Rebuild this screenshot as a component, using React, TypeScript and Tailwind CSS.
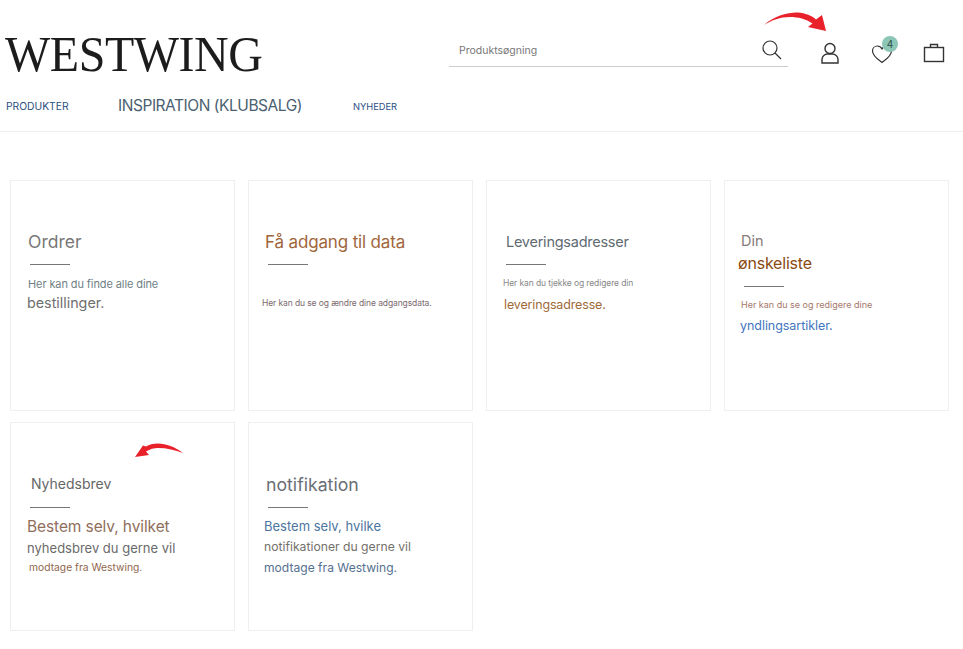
export default function App() {
  const cardBase = "relative bg-white border border-[#efefef]";
  const rule = "h-px w-10 bg-[#777]";
  return (
    <div className="relative w-[963px] h-[649px] overflow-hidden bg-white font-['Inter',sans-serif]">
      <header className="h-[132px] border-b border-[#eeeeee]">
        <div className="flex h-[92px]">
          <div className="w-[449px] shrink-0 pl-[5px] pt-[27px]">
            <span className="block h-[54px] origin-left scale-x-[0.96] font-['Liberation_Serif',serif] text-[50px] leading-[54px] tracking-[-0.5px] text-[#1c1c1c]">WESTWING</span>
          </div>
          <div className="mt-[35px] flex h-[32px] w-[339px] shrink-0 items-center justify-between border-b border-[#cccccc] pl-[10px] pr-[5px]">
            <span className="text-[10.5px] leading-[30px] text-[#777]">Produktsøgning</span>
            <svg width="21" height="21" viewBox="0 0 21 21" fill="none" stroke="#333" strokeWidth="1.2" className="mb-[1px]">
              <circle cx="8" cy="8" r="7" />
              <path d="M13 13l6 6" />
            </svg>
          </div>
          <svg width="20" height="22" viewBox="0 0 20 22" fill="none" stroke="#333" strokeWidth="1.4" className="ml-[32px] mt-[42px]">
            <circle cx="10" cy="6.5" r="5" />
            <path d="M2 21v-3.500C2 14 5 12 7.500 12h5c2.500 0 5.500 2 5.500 5.500V21z" />
          </svg>
          <div className="relative ml-[31px] mt-[44px] h-[20px] w-[22px]">
            <svg width="22" height="20" viewBox="0 0 22 20" fill="none" stroke="#333" strokeWidth="1.2">
              <path d="M11 18.500C7 15.500 1.500 12 1.500 7c0-3 2.300-5 4.800-5 2 0 3.700 1 4.700 3 1-2 2.700-3 4.700-3 2.500 0 4.800 2 4.800 5 0 5-5.500 8.500-9.500 11.500z" />
            </svg>
            <span className="absolute left-[11px] top-[-8px] flex h-4 w-4 items-center justify-center rounded-full bg-[#8cc6b6] text-[10px] leading-none text-[#2f4f48]">4</span>
          </div>
          <svg width="22" height="20" viewBox="0 0 22 20" fill="none" stroke="#333" strokeWidth="1.400" className="ml-[30px] mt-[43px]">
            <rect x="1.500" y="4.500" width="19" height="14" />
            <path d="M7.500 4.500V1.500h7v3" />
          </svg>
        </div>
        <nav className="flex h-[28px] items-center pl-[6px]">
          <span className="w-[112px] text-[10.300px] leading-[28px] text-[#2b4f7d]">PRODUKTER</span>
          <span className="w-[235px] text-[15.500px] leading-[28px] tracking-[-0.450px] text-[#4a6070]">INSPIRATION (KLUBSALG)</span>
          <span className="mt-[2px] text-[9.300px] leading-[28px] text-[#2b4f85]">NYHEDER</span>
        </nav>
      </header>

      <main className="grid grid-cols-[225px_225px_225px_225px] grid-rows-[231px_209px] gap-x-[13px] gap-y-[11px] pl-[10px] pt-[48px]">
        <section className={cardBase}>
          <h2 className="ml-[17px] mt-[49px] h-6 text-[17.500px] leading-6 text-[#777]">Ordrer</h2>
          <div className={`${rule} ml-[19px] mt-[10px]`} />
          <p className="ml-[17px] mt-[11px] h-4 text-[11px] leading-4 tracking-[-0.1px] text-[#6f7f85]">Her kan du finde alle dine</p>
          <p className="ml-[16px] mt-px h-5 text-[14.300px] leading-5 text-[#6f6f6f]">bestillinger.</p>
        </section>

        <section className={cardBase}>
          <h2 className="ml-[16px] mt-[49px] h-6 text-[17px] leading-6 tracking-[-0.15px] text-[#a0653a]">Få adgang til data</h2>
          <div className={`${rule} ml-[19px] mt-[10px]`} />
          <p className="ml-[13px] mt-[31px] h-[14px] text-[8.500px] leading-[14px] tracking-[-0.1px] text-[#7a6a6e]">Her kan du se og ændre dine adgangsdata.</p>
        </section>

        <section className={cardBase}>
          <h2 className="ml-[19px] mt-[51px] h-5 text-[14.500px] leading-5 tracking-[-0.25px] text-[#5f6b72]">Leveringsadresser</h2>
          <div className={`${rule} ml-[19px] mt-[12px]`} />
          <p className="ml-[16px] mt-[11px] h-[14px] text-[8.500px] leading-[14px] tracking-[-0.1px] text-[#888]">Her kan du tjekke og redigere din</p>
          <p className="ml-[17px] mt-[5px] h-5 text-[12.500px] leading-5 tracking-[-0.15px] text-[#a0693a]">leveringsadresse.</p>
        </section>

        <section className={cardBase}>
          <h2 className="ml-[16px] mt-[50px] h-5 text-[14.500px] leading-5 text-[#857b78]">Din</h2>
          <h2 className="ml-[13px] mt-px h-[22px] text-[16px] leading-[22px] tracking-[-0.2px] text-[#8a4a12]">ønskeliste</h2>
          <div className={`${rule} ml-[19px] mt-[12px]`} />
          <p className="ml-[16px] mt-[11px] h-[14px] text-[9px] leading-[14px] text-[#a5786a]">Her kan du se og redigere dine</p>
          <p className="ml-[15px] mt-[4px] h-5 text-[12.500px] leading-5 tracking-[-0.05px] text-[#3f74c0]">yndlingsartikler.</p>
        </section>

        <section className={cardBase}>
          <svg className="absolute left-[123px] top-[18px]" width="50" height="18" viewBox="134 440 50 18" fill="#e8212b">
            <path d="M183 452C175 446 166 442.500 158 442.500C153 442.500 149 443.500 146 445.500L143 444.500L135 456L149 454L146 450.500C150 448 154 447 158 447C167 447 175 449 183 452Z" />
          </svg>
          <h2 className="ml-[20px] mt-[51px] h-5 text-[14px] leading-5 text-[#666]">Nyhedsbrev</h2>
          <div className={`${rule} ml-[19px] mt-[13px]`} />
          <p className="ml-[16px] mt-[8px] h-[22px] text-[15.500px] leading-[22px] tracking-[-0.1px] text-[#8f6e5c]">Bestem selv, hvilket</p>
          <p className="ml-[16px] h-5 text-[13px] leading-5 text-[#6a6a6a]">nyhedsbrev du gerne vil</p>
          <p className="ml-[18px] h-4 mt-px text-[10.300px] leading-4 text-[#90674f]">modtage fra Westwing.</p>
        </section>

        <section className={cardBase}>
          <h2 className="ml-[17px] mt-[50px] h-6 text-[17.700px] leading-6 text-[#6a6e75]">notifikation</h2>
          <div className={`${rule} ml-[19px] mt-[10px]`} />
          <p className="ml-[15px] mt-[8px] h-5 text-[13px] leading-5 text-[#4d75a0]">Bestem selv, hvilke</p>
          <p className="ml-[15px] mt-px h-5 text-[12.200px] leading-5 text-[#73706a]">notifikationer du gerne vil</p>
          <p className="ml-[15px] mt-px h-5 text-[12.100px] leading-5 text-[#55708f]">modtage fra Westwing.</p>
        </section>
      </main>

      <svg className="absolute left-[760px] top-[8px]" width="70" height="28" viewBox="760 8 70 28" fill="#e8212b">
        <path d="M764 25C775 15 790 12 798 12.500C805 13 812 15.500 816 19.500L822 15L826 31L808 27L812.500 23.500C806 19 798 17 790 17C780 17 772 20 764 25Z" />
      </svg>
    </div>
  );
}
